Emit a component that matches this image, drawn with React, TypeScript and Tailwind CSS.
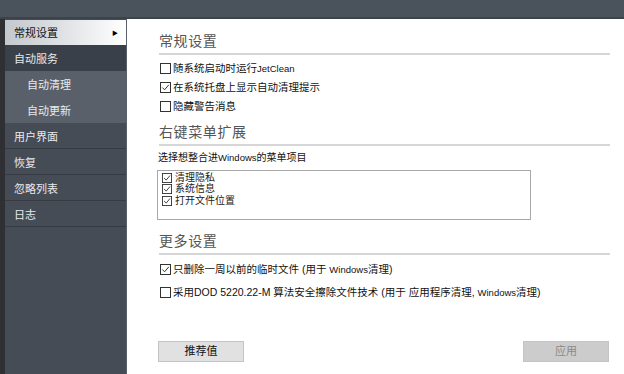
import React from 'react';

const font = { fontFamily: '"Liberation Sans", "Noto Sans CJK SC", sans-serif' };

function Box({ checked, small }: { checked?: boolean; small?: boolean }) {
    const s = small ? 10 : 11;
    return (
        <svg width={s} height={s} viewBox="0 0 11 11" className="shrink-0">
            <rect x="0.5" y="0.5" width="10" height="10" fill="white" stroke="#333" />
            {checked && <path d="M2.3 5.5 L4.6 7.8 L8.8 2.8" fill="none" stroke="#333" strokeWidth="1" />}
        </svg>
    );
}

function NavItem({ label, sub, active, group }: { label: string; sub?: boolean; active?: boolean; group?: boolean }) {
    if (active) {
        return (
            <div className="h-[25px] flex items-center justify-between pt-[2px] pl-[9px] pr-[8px] bg-gradient-to-r from-[#c3c8ce] to-white text-[#111] text-[11px]">
                <span>{label}</span>
                <span className="text-[6px] text-black">▶</span>
            </div>
        );
    }
    return (
        <div
            className={`h-[26px] flex items-center pt-[3px] text-[11px] text-[#e8eaec] border-b ${sub ? 'pl-[22px] bg-[#59606a] border-[#59606a]' : group ? 'pl-[9px] bg-[#3a4049] border-[#3a4049]' : 'pl-[9px] bg-[#454c56] border-[#363b42]'}`}
        >
            {label}
        </div>
    );
}

function Heading({ children }: { children: React.ReactNode }) {
    return (
        <div className="pl-[4px]">
            <div className="text-[14px] text-[#555] leading-[20px] tracking-[0.6px]">{children}</div>
            <div className="h-[2px] bg-[#d6d6d6] mt-[2px] mr-[14px]" />
        </div>
    );
}

function Check({ checked, children }: { checked?: boolean; children: React.ReactNode }) {
    return (
        <div className="flex items-center gap-[2px] pl-[4px] h-[19px] text-[10.5px] text-[#111]">
            <Box checked={checked} />
            <span>{children}</span>
        </div>
    );
}

const Win = ({ children }: { children: React.ReactNode }) => <span className="text-[9.5px]">{children}</span>;

export default function App() {
    return (
        <div className="w-[624px] h-[374px] flex flex-col bg-white overflow-hidden" style={font}>
            <div className="h-[19px] bg-[#4a525c] border-b-2 border-[#3d434b] shrink-0" />
            <div className="flex flex-1 min-h-0">
                <div className="w-[5px] bg-[#2e3034]" />
                <div className="w-[122px] bg-[#454c56] border-r border-[#5a616a] pt-[1px]">
                    <NavItem label="常规设置" active />
                    <NavItem label="自动服务" group />
                    <NavItem label="自动清理" sub />
                    <NavItem label="自动更新" sub />
                    <NavItem label="用户界面" />
                    <NavItem label="恢复" />
                    <NavItem label="忽略列表" />
                    <NavItem label="日志" />
                </div>
                <div className="flex-1 flex flex-col pl-[28px] pt-[12px]">
                    <Heading>常规设置</Heading>
                    <div className="mt-[4px] pl-[1px]">
                        <Check>随系统启动时运行<Win>JetClean</Win></Check>
                        <Check checked>在系统托盘上显示自动清理提示</Check>
                        <Check>隐藏警告消息</Check>
                    </div>
                    <div className="mt-[6px]">
                        <Heading>右键菜单扩展</Heading>
                    </div>
                    <div className="pl-[3px] mt-[2px] text-[10px] text-[#111] leading-[19px]">
                        选择想整合进<Win>Windows</Win>的菜单项目
                    </div>
                    <div className="ml-[2px] mt-[3px] w-[374px] h-[50px] border border-[#a8a8a8] pl-[4px] pt-[1px]">
                        {['清理隐私', '系统信息', '打开文件位置'].map((t) => (
                            <div key={t} className="flex items-center gap-[3px] h-[11.5px] text-[10px] leading-[10px] text-[#222]">
                                <Box checked small />
                                <span>{t}</span>
                            </div>
                        ))}
                    </div>
                    <div className="mt-[11px]">
                        <Heading>更多设置</Heading>
                    </div>
                    <div className="mt-[5px] pl-[1px] flex flex-col gap-[4px]">
                        <Check checked>只删除一周以前的临时文件 (用于 <Win>Windows</Win>清理)</Check>
                        <Check>采用DOD 5220.22-M 算法安全擦除文件技术 (用于 应用程序清理, <Win>Windows</Win>清理)</Check>
                    </div>
                    <div className="flex-1" />
                    <div className="flex justify-between pr-[15px] pl-[3px] mb-[12px]">
                        <div className="w-[86px] h-[21px] bg-[#e1e1e1] border border-[#c4c4c4] flex items-center justify-center text-[11px] text-[#111]">推荐值</div>
                        <div className="w-[86px] h-[21px] bg-[#cccccc] border border-[#c4c4c4] flex items-center justify-center text-[11px] text-[#8a8a8a]">应用</div>
                    </div>
                </div>
            </div>
        </div>
    );
}
